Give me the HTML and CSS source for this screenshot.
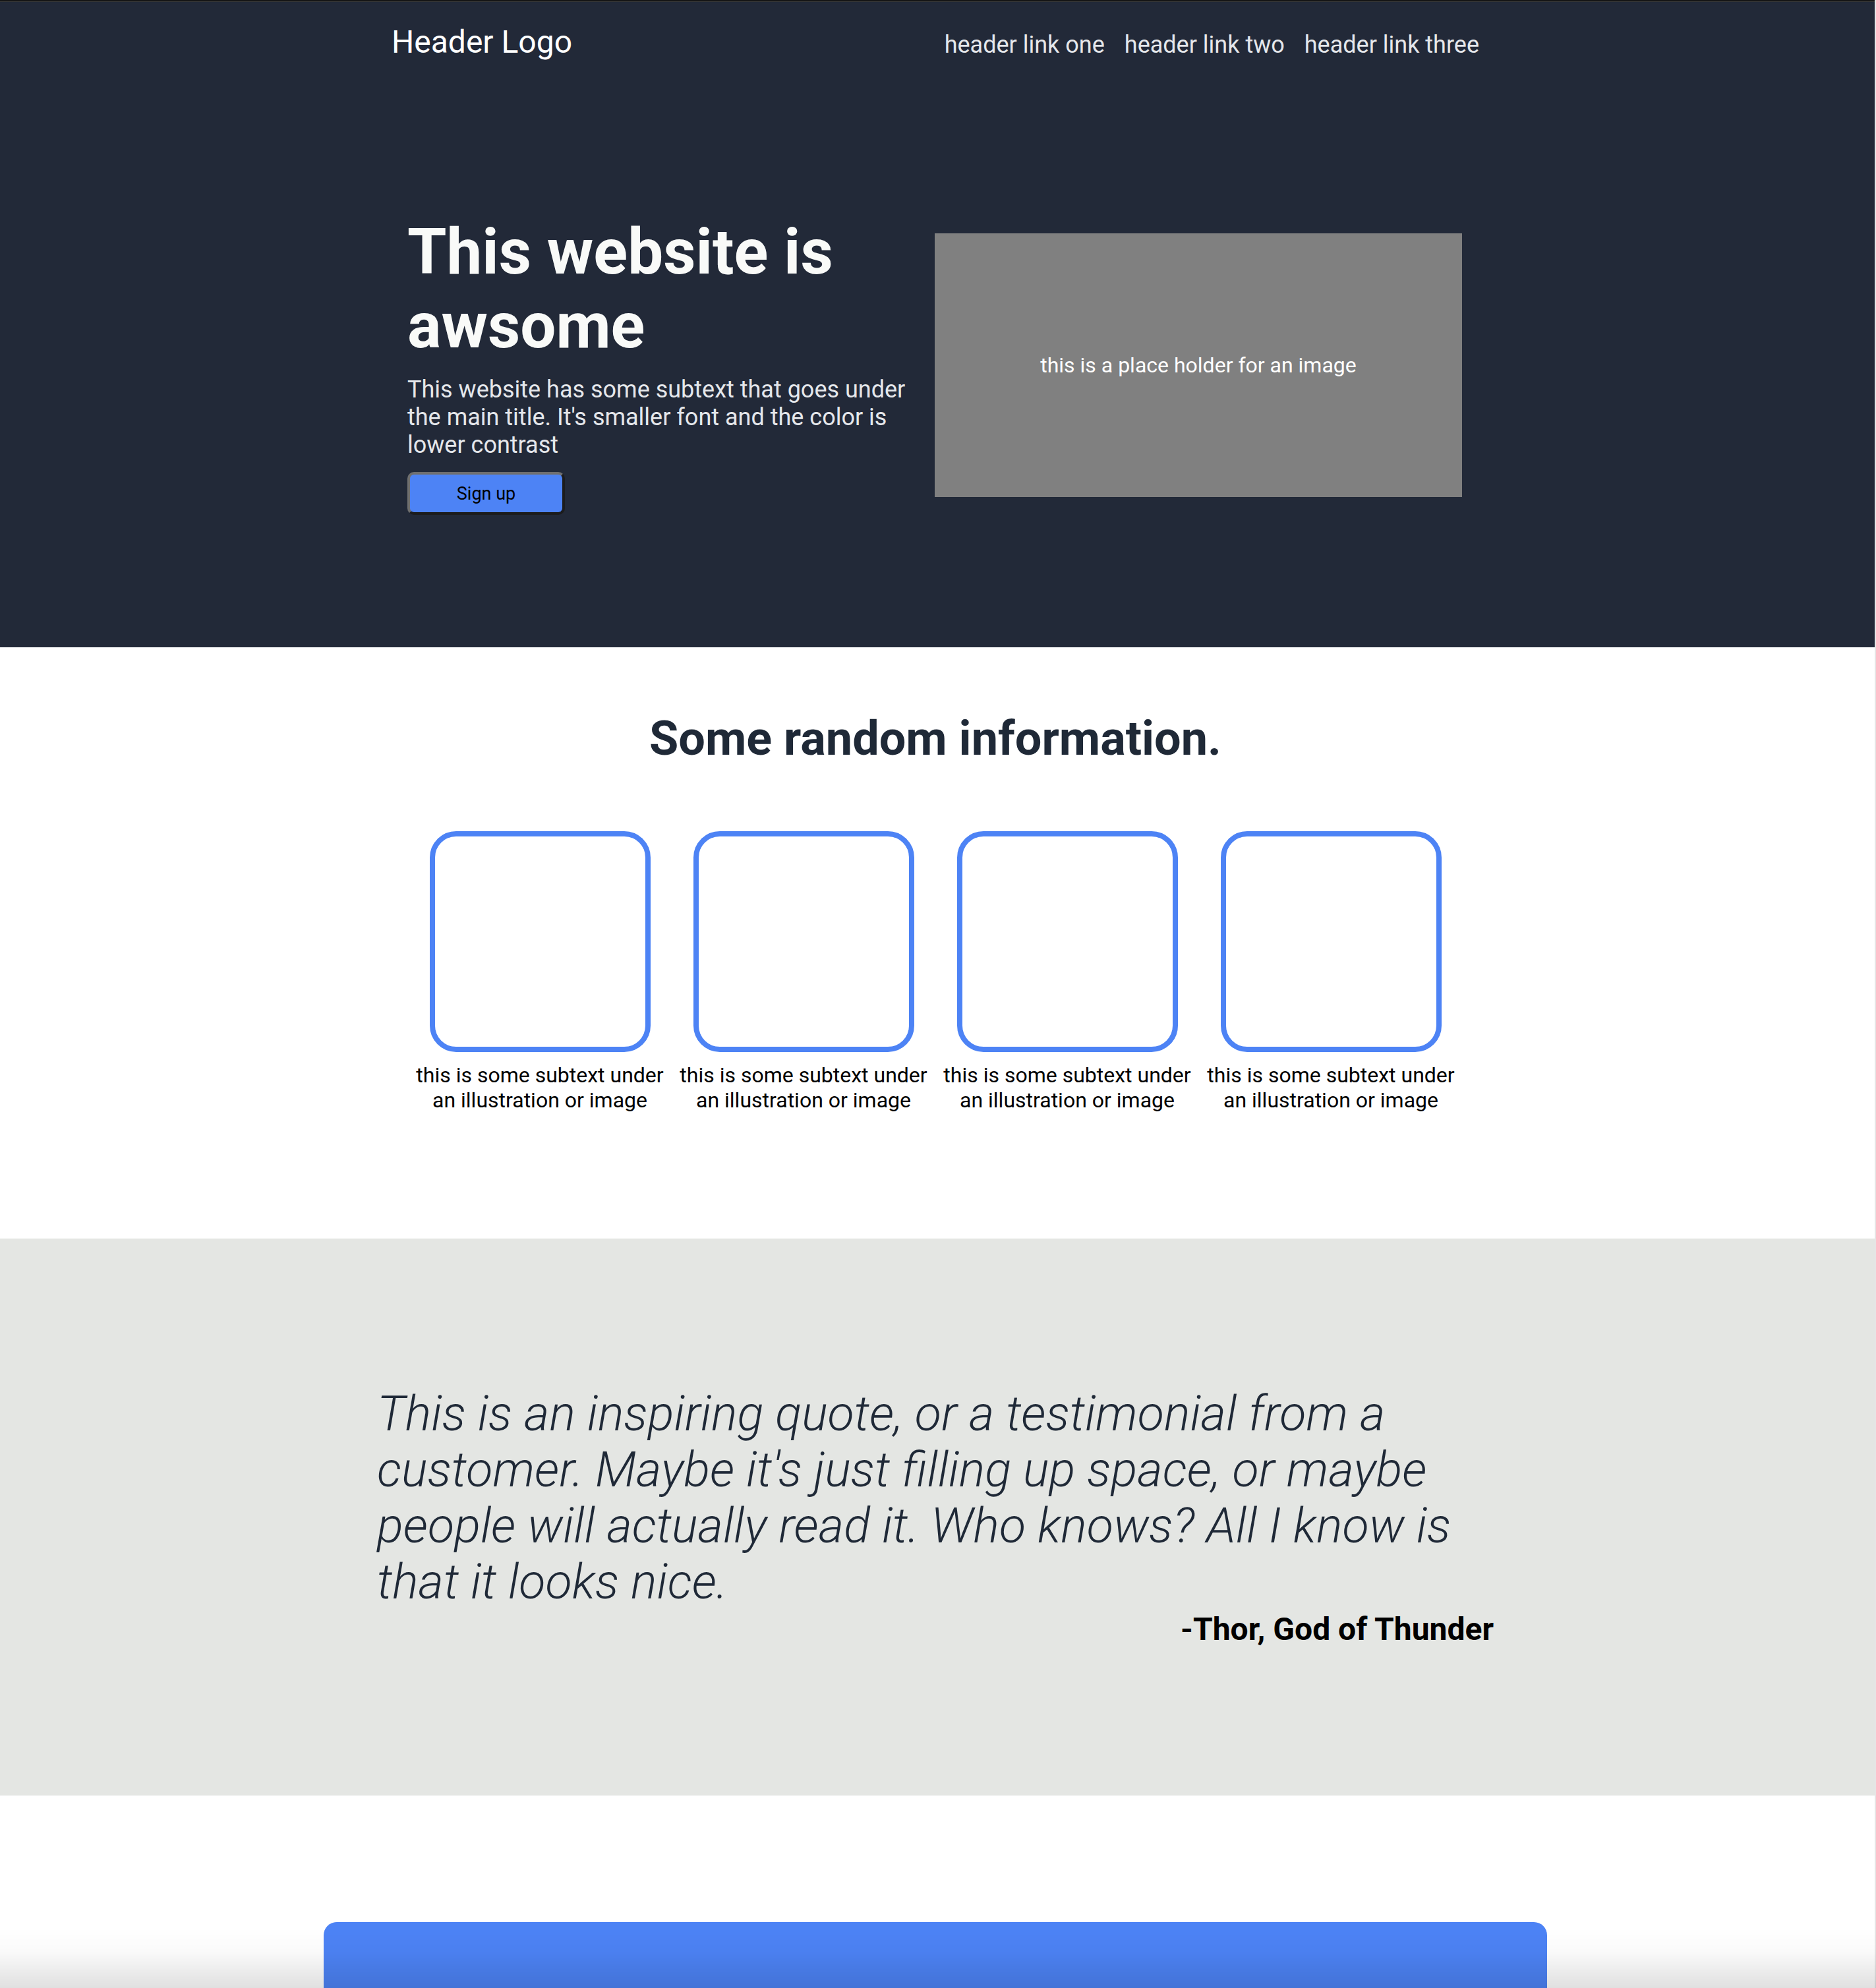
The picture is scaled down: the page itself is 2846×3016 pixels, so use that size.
FILE: index.html
```html
<!DOCTYPE html>
<html lang="en">
<head>
<meta charset="utf-8">
<title>Landing page</title>
<link rel="stylesheet" href="styles.css">
</head>
<body>
<div class="page">
  <section class="hero section">
    <header class="header">
      <div class="logo">Header Logo</div>
      <nav class="nav">
        <a href="#">header link one</a>
        <a href="#">header link two</a>
        <a href="#">header link three</a>
      </nav>
    </header>
    <div class="hero-main">
      <div class="hero-text">
        <h1 class="hero-title">This website is awsome</h1>
        <p class="hero-sub">This website has some subtext that goes under the main title. It's smaller font and the color is lower contrast</p>
        <button class="signup" type="button">Sign up</button>
      </div>
      <div class="hero-image">this is a place holder for an image</div>
    </div>
  </section>

  <section class="info section">
    <h2 class="info-title">Some random information.</h2>
    <div class="cards">
      <div class="card">
        <div class="card-box"></div>
        <p class="card-text">this is some subtext under an illustration or image</p>
      </div>
      <div class="card">
        <div class="card-box"></div>
        <p class="card-text">this is some subtext under an illustration or image</p>
      </div>
      <div class="card">
        <div class="card-box"></div>
        <p class="card-text">this is some subtext under an illustration or image</p>
      </div>
      <div class="card">
        <div class="card-box"></div>
        <p class="card-text">this is some subtext under an illustration or image</p>
      </div>
    </div>
  </section>

  <section class="quote section">
    <div class="quote-inner">
      <p class="quote-text">This is an inspiring quote, or a testimonial from a customer. Maybe it's just filling up space, or maybe people will actually read it. Who knows? All I know is that it looks nice.</p>
      <p class="quote-author">-Thor, God of Thunder</p>
    </div>
  </section>

  <section class="cta section">
    <div class="cta-box"></div>
  </section>
</div>
<div class="window-shade"></div>
</body>
</html>
```

FILE: styles.css
```css
* {
  box-sizing: border-box;
}

html, body {
  margin: 0;
  padding: 0;
}

body {
  background: #e6e6e6;
  font-family: Roboto, "Liberation Sans", Arial, sans-serif;
}

.page {
  margin-right: 2px;
  background: #ffffff;
  overflow: hidden;
}

/* sections keep their background full width; content is centred slightly left */
.section {
  padding-right: 6px;
}

/* ---------- hero ---------- */
.hero {
  border-top: 2px solid #151515;
  background: linear-gradient(#3a3a3a, #3a3a3a) top left / 100% 1px no-repeat, #222938;
}

.header {
  width: 1650px;
  margin: 0 auto;
  padding-top: 33px;
  display: flex;
  justify-content: space-between;
  align-items: baseline;
}

.logo {
  font-size: 48px;
  line-height: 58px;
  color: #ffffff;
}

.nav {
  display: flex;
  gap: 30px;
}

.nav a {
  font-size: 36px;
  line-height: 44px;
  color: #e5e7eb;
  text-decoration: none;
}

.hero-main {
  width: 1602px;
  margin: 0 auto;
  padding: 233px 0 201px;
  display: flex;
  align-items: center;
}

.hero-text {
  width: 800px;
  flex: none;
}

.hero-title {
  margin: 0;
  font-size: 96px;
  line-height: 112px;
  font-weight: 700;
  color: #f9faf8;
}

.hero-sub {
  margin: 20px 0 0;
  font-size: 36px;
  line-height: 42px;
  color: #e5e7eb;
}

.signup {
  display: block;
  margin-top: 20px;
  width: 239px;
  height: 65px;
  padding: 0;
  background: #4d83f5;
  border: 4px solid;
  border-color: #6f6f6f #1c1c1c #1c1c1c #6f6f6f;
  border-radius: 10px;
  font-family: Roboto, "Liberation Sans", Arial, sans-serif;
  font-size: 27px;
  color: #000000;
}

.hero-image {
  width: 800px;
  height: 400px;
  flex: none;
  background: #808080;
  color: #ffffff;
  font-size: 32px;
  display: flex;
  align-items: center;
  justify-content: center;
}

/* ---------- info ---------- */
.info {
  padding-top: 97px;
  padding-bottom: 191px;
  text-align: center;
}

.info-title {
  margin: 0 0 98px;
  font-size: 72px;
  line-height: 84px;
  font-weight: 700;
  color: #1f2937;
}

.cards {
  width: 1600px;
  margin: 0 auto;
  display: flex;
}

.card {
  width: 400px;
  display: flex;
  flex-direction: column;
  align-items: center;
}

.card-box {
  width: 335px;
  height: 335px;
  border: 8px solid #4d83f5;
  border-radius: 40px;
}

.card-text {
  margin: 16px 0 0;
  font-size: 32px;
  line-height: 38px;
  color: #000000;
}

/* ---------- quote ---------- */
.quote {
  background: #e4e6e3;
  padding-top: 223px;
  padding-bottom: 224px;
}

.quote-inner {
  width: 1694px;
  margin: 0 auto;
}

.quote-text {
  margin: 0;
  font-size: 74px;
  line-height: 85px;
  font-style: italic;
  font-weight: 300;
  color: #1f2937;
}

.quote-author {
  margin: 2px 0 0;
  text-align: right;
  font-size: 48px;
  line-height: 56px;
  font-weight: 700;
  color: #000000;
}

/* ---------- call to action ---------- */
.cta {
  padding-top: 192px;
}

.cta-box {
  width: 1856px;
  height: 300px;
  margin: 0 auto;
  background: #4d83f5;
  border-radius: 20px 20px 0 0;
}

/* window edge shading (overlay) */
.window-shade {
  position: fixed;
  left: 0;
  right: 0;
  bottom: 0;
  height: 92px;
  pointer-events: none;
  background: linear-gradient(to bottom, rgba(0, 0, 0, 0), rgba(0, 0, 0, 0.02) 40%, rgba(0, 0, 0, 0.12));
}
```
